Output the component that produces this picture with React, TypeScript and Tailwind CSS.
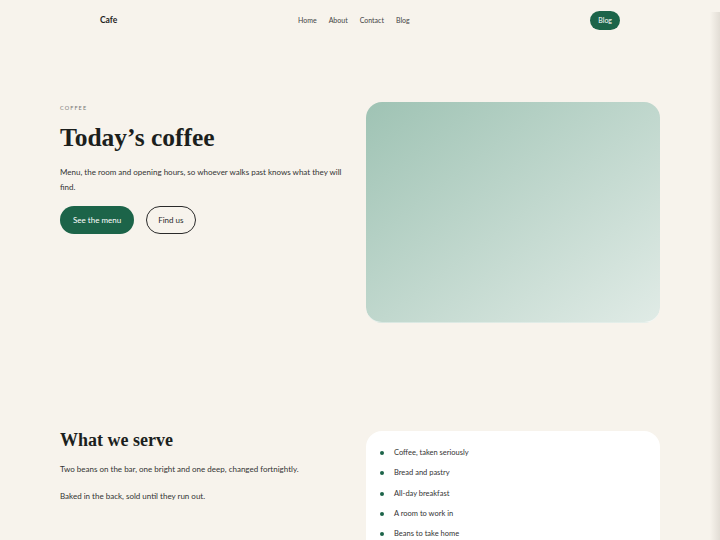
import React from 'react';

const serif = 'font-["Liberation_Serif","DejaVu_Serif",serif]';

const navLinks = ['Home', 'About', 'Contact', 'Blog'];

const serves = [
    'Coffee, taken seriously',
    'Bread and pastry',
    'All-day breakfast',
    'A room to work in',
    'Beans to take home',
];

export default function App() {
    return (
        <div className='relative min-h-[540px] overflow-hidden bg-[#f7f3ec] font-["Lato","Noto_Sans",sans-serif] text-[#2a2a2a]'>
            {/* nav */}
            <header className="mx-auto flex h-10 w-[520px] items-center justify-between">
                <span className="text-[8.5px] font-bold text-[#1f1f1f]">Cafe</span>
                <nav className="flex gap-3 text-[7px] text-[#444]">
                    {navLinks.map(link => (
                        <a key={link} href="#">{link}</a>
                    ))}
                </nav>
                <a href="#" className="flex h-[19px] items-center rounded-full bg-[#1c6449] px-2 text-[7px] text-white">Blog</a>
            </header>

            <main className="mx-auto w-[600px]">
                {/* hero */}
                <section className="mt-[62px] grid grid-cols-2 items-start gap-3">
                    <div className="pt-[2px]">
                        <p className="text-[5.5px] tracking-[0.2em] text-[#777]">COFFEE</p>
                        <h1 className={`${serif} mt-[10px] text-[25.5px] font-bold leading-[32px] text-[#1c1f1d]`}>Today’s coffee</h1>
                        <p className="mt-[11px] text-[8px] leading-[15px] text-[#333]">
                            Menu, the room and opening hours, so whoever walks past knows what they will find.
                        </p>
                        <div className="mt-[11px] flex gap-[12px]">
                            <a href="#" className="flex h-[28px] items-center rounded-full bg-[#1c6449] px-[13px] text-[8px] text-white">See the menu</a>
                            <a href="#" className="flex h-[28px] items-center rounded-full border border-[#2a2a2a] px-[11px] text-[8px] text-[#2a2a2a]">Find us</a>
                        </div>
                    </div>
                    <div className="h-[221px] rounded-2xl border-b border-white/60 bg-gradient-to-br from-[#9fc3b4] to-[#e0ebe6]" />
                </section>

                {/* what we serve */}
                <section className="mt-[108px] grid grid-cols-2 items-start gap-3">
                    <div>
                        <h2 className={`${serif} text-[18px] font-bold leading-[18px] text-[#1c1f1d]`}>What we serve</h2>
                        <p className="mt-[14px] text-[8px] leading-[12px] text-[#333]">
                            Two beans on the bar, one bright and one deep, changed fortnightly.
                        </p>
                        <p className="mt-[15px] text-[8px] leading-[12px] text-[#333]">
                            Baked in the back, sold until they run out.
                        </p>
                    </div>
                    <ul className="flex flex-col gap-[8.3px] rounded-2xl bg-white px-[14px] pb-5 pt-[16px]">
                        {serves.map(item => (
                            <li key={item} className="flex items-center gap-[10px] text-[7.5px] leading-[12px] text-[#333]">
                                <span className="h-[4px] w-[4px] rounded-full bg-[#1c6449]" />
                                {item}
                            </li>
                        ))}
                    </ul>
                </section>
            </main>

            {/* edge shade on the right */}
            <div className="pointer-events-none absolute bottom-0 right-0 top-3 w-[10px] bg-gradient-to-r from-transparent to-[#e2ddd5]" />
        </div>
    );
}
